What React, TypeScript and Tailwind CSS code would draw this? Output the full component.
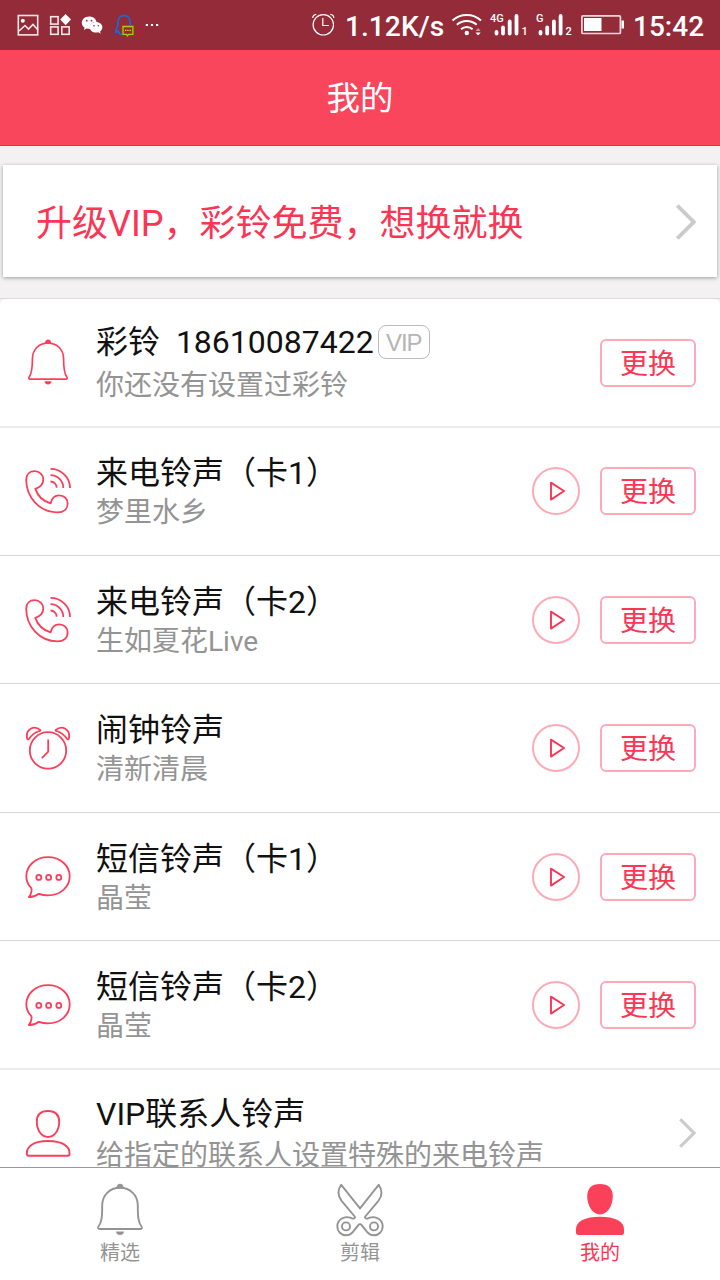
import type { ReactNode } from "react";

type Row = {
  icon: ReactNode;
  title: string;
  sub: string;
  box: string;
  pad: string;
  gap?: string;
  divider?: "thin" | "soft";
  vip?: boolean;
  play?: boolean;
  link?: boolean;
};

function StatusBar() {
  return (
    <div className="flex h-[50px] shrink-0 items-center bg-[#932b38] pl-[17px] pr-[15px] text-white">
      <svg className="h-[50px] w-[150px] shrink-0" viewBox="17 0 150 50" fill="none">
        <g stroke="#f7e6e8" strokeWidth="1.6">
          <rect x="18.3" y="15.5" width="19.4" height="19.4" />
          <path d="M19 31l6-5.5 3.5 3.5 4.5-4.5 5 5.5" />
          <rect x="50.7" y="16.7" width="7.4" height="7.4" />
          <rect x="50.7" y="26.9" width="7.4" height="7.4" />
          <rect x="61.8" y="26.9" width="7.4" height="7.4" />
        </g>
        <circle cx="22.8" cy="20.7" r="2" fill="#fff" />
        <path d="M65.6 14l5.4 5.6-5.4 5.6-5.4-5.6z" fill="#fff" />
        <path
          d="M89.2 16.4c-4.2 0-7.4 2.8-7.4 6.3 0 2 1 3.8 2.8 5l-.8 2.4 2.8-1.5c1.2.3 2.2.5 3.4.4-.9-4.2 2.4-7.5 6.600-7.3-.7-3.1-3.7-5.3-7.4-5.3z"
          fill="#fff"
        />
        <path
          d="M96 21.9c-3.6 0-6.3 2.4-6.3 5.3 0 3.1 2.9 5.4 6.3 5.4.8 0 1.6-.1 2.3-.3l2.4 1.4-.6-2.2c1.5-1.1 2.3-2.5 2.3-4.2 0-3-2.9-5.4-6.4-5.4z"
          fill="#fff"
        />
        <g fill="#932b38">
          <circle cx="86.7" cy="20.7" r="0.9" />
          <circle cx="91.5" cy="20.7" r="0.9" />
          <circle cx="94" cy="25.7" r="0.8" />
          <circle cx="98.3" cy="25.7" r="0.8" />
        </g>
        <path
          d="M122.5 34.3c-1.8.3-3-.2-3.200-1.5l-1.300-2c-.8 1-1.600 1.800-2 1.500-.6-.5.1-3.800 1.700-5.700v-2.900c0-5 2.600-8.300 6.400-8.300s6.300 3.300 6.300 8.300v1.500"
          stroke="#0d6fe8"
          strokeWidth="1.6"
        />
        <path d="M123 26.5h9.900v7.800h-4.200l-1.400 1.500-.8-1.500H123z" stroke="#a4d30a" strokeWidth="1.3" />
        <path d="M125 30.400h1.300M127.300 30.400h1.300M129.600 30.400h1.300" stroke="#d5e314" strokeWidth="1.4" />
        <path d="M145.800 25h2.200M150.900 25h2.200M156 25h2.200" stroke="#fff" strokeWidth="2" />
      </svg>
      <div className="ml-auto flex items-center">
        <svg className="h-[50px] w-[24px]" viewBox="311 0 24 50" fill="none" stroke="#fff" strokeWidth="1.2">
          <circle cx="323.3" cy="24.8" r="10.2" />
          <path d="M322.800 18v7.500h6M312.800 18c0-2 1-3.500 3.500-3.700M333.800 18c0-2-1-3.500-3.500-3.700" />
        </svg>
        <span className="ml-[10px] w-[100px] whitespace-nowrap pt-[3px] text-[28.2px] font-medium leading-[47px]">1.12K/s</span>
        <svg className="ml-[6px] h-[50px] w-[176px]" viewBox="451 0 176 50" fill="none">
          <path
            d="M452.500 20.500c8-7.300 20.500-7.300 28.500 0M456.800 24.800c5.700-5.200 14.200-5.200 19.900 0M461 29.300c3.300-3 8.300-3 11.600 0"
            stroke="#fff"
            strokeWidth="2"
          />
          <circle cx="466.8" cy="33" r="2.2" fill="#fff" />
          <path d="M475.500 31l2.600-3 2.600 3z" fill="#c8949b" />
          <path d="M475.500 32.500l2.600 3 2.600-3z" fill="#fff" />
          <g stroke="#fff" strokeWidth="3.8" strokeLinecap="round">
            <path d="M496.500 32v1.500M503 27.500v6M509.700 21.500v12M516.500 16v17.500" />
            <path d="M540.500 32v1.500M547.200 27.500v6M553.900 21.500v12M560.600 16v17.500" />
          </g>
          <g fill="#fff" fontFamily="Roboto, sans-serif" fontSize="11" fontWeight="500">
            <text x="490" y="22">4G</text>
            <text x="536" y="22">G</text>
            <text x="521.5" y="35.3">1</text>
            <text x="565.5" y="35.3">2</text>
          </g>
          <rect x="581.9" y="15.9" width="38.5" height="17.6" rx="1" stroke="#f0d9dc" strokeWidth="1.7" />
          <rect x="584" y="18" width="17.5" height="13" fill="#fff" />
          <path d="M621.500 20.500h2.500v8h-2.500z" fill="#fff" />
        </svg>
        <span className="ml-[6px] w-[72px] whitespace-nowrap pt-[3px] text-[28px] font-medium leading-[47px]">15:42</span>
      </div>
    </div>
  );
}

function Bell({ className }: { className: string }) {
  return (
    <svg className={className} viewBox="0 0 48 54" fill="none" stroke="currentColor" strokeWidth="1.9" strokeLinejoin="round">
      <path d="M24 4.800C13.500 4.800 6.200 12.300 6.200 22.500c0 10-.2 16.500-3.700 21-.8 1.200-.4 2.500 1 2.500h41c1.400 0 1.800-1.300 1-2.500-3.500-4.500-3.700-11-3.700-21C41.800 12.300 34.500 4.800 24 4.800z" />
      <path d="M21.500 4.500c0-3.600 5-3.600 5 0z" fill="currentColor" />
      <path d="M20 48.500h8c0 4.700-8 4.700-8 0z" fill="currentColor" stroke="none" />
    </svg>
  );
}

function Phone() {
  return (
    <svg className="size-12" viewBox="0 -0.7 48 48" fill="none" stroke="currentColor" strokeWidth="1.8" strokeLinejoin="round">
      <path d="M2.200 12C2.200 6.500 5.800 3.500 10.600 3.500c4.900 0 8.700 3.700 8.700 8.400 0 4.800-3 7.600-8 9.300 2.200 6.300 7.500 12.300 15.300 14.400 1-4.800 3.700-8 8.600-8 5 0 8.400 3.500 8.400 8.200 0 5.500-4 8.800-10 8.800C15.500 44.600 2.200 29.500 2.200 12z" />
      <path d="M26.500 1.200C37 1.200 46 9.500 46 20.300M26.500 7.500c7 0 12.800 5.500 12.800 12.800M26.500 13.800c3.500 0 6.200 2.800 6.200 6.200" />
    </svg>
  );
}

function AlarmClock() {
  return (
    <svg className="size-12" viewBox="0 0.5 48 48" fill="none" stroke="currentColor" strokeWidth="1.8" strokeLinejoin="round">
      <circle cx="24" cy="26.9" r="18.2" />
      <path d="M24.200 17v11.200l-5.800 5.800" strokeLinecap="square" />
      <path d="M16.300 6.500C10 1.500 1.500 5.500 3 14.500c.1 1.200.8 1.800 1.700 1.200 3-4.500 6.300-6.800 10.700-8.200.9-.2 1.200-.6.9-1zM31.700 6.500c6.300-5 14.800-1 13.300 8-.1 1.200-.8 1.800-1.700 1.200-3-4.500-6.300-6.800-10.700-8.200-.9-.2-1.200-.6-.9-1z" />
    </svg>
  );
}

function Message() {
  return (
    <svg className="size-12" viewBox="0 0 48 48" fill="none" stroke="currentColor" strokeWidth="1.8" strokeLinejoin="round">
      <path d="M24 4.200C11.700 4.200 2.300 12.500 2.300 23.300c0 5.200 2 9 5.200 12 .4 3.500-.7 6.300-2.700 8.700 3.700.2 7-.8 10-3.200 3 1 6 1.500 9.200 1.500 12.300 0 21.700-8.300 21.700-19S36.300 4.200 24 4.200z" />
      <circle cx="14.8" cy="24.4" r="2.5" />
      <circle cx="24.6" cy="24.4" r="2.5" />
      <circle cx="34.8" cy="24.4" r="2.5" />
    </svg>
  );
}

function Contact() {
  return (
    <svg className="size-12" viewBox="0 -1 48 48" fill="none" stroke="currentColor" strokeWidth="1.9" strokeLinejoin="round">
      <path d="M24 1c-7.500 0-11.200 4.300-11.200 10.800C12.800 20 17.500 27 24 27s11.200-7 11.200-15.200C35.200 5.300 31.500 1 24 1z" />
      <path d="M24 31C10 31 2.800 36 2.800 43.500c0 1.500.4 2.300 1.800 2.300h39c1.400 0 2-.8 2-2.300C45.600 36 38 31 24 31z" />
    </svg>
  );
}

function Scissors() {
  return (
    <svg className="h-[54px] w-[48px]" viewBox="0 0 48 54" fill="none" stroke="currentColor" strokeWidth="1.9" strokeLinejoin="round">
      <path d="M5.200 1.800L24 25.400 42.700 1.800c3.700 5.300 3.500 11-.3 16L29.300 33.500c-.8 1.200.4 2.600 2.200 2 .8-.3 1.400-.5 2.200-.8 6.300-2 13 2 13 8.800 0 5-3.900 8.800-8.800 8.800-3 0-5-1.200-6.700-3.200l-5.700-7.200c-.9-1-2.100-1-3 0l-5.700 7.200c-1.700 2-3.700 3.200-6.700 3.200-4.900 0-8.800-3.800-8.800-8.800 0-6.800 6.700-10.800 13-8.800.8.300 1.400.5 2.200.8 1.800.6 3-.8 2.200-2L5.600 17.800C1.700 12.800 1.500 7.100 5.200 1.800z" />
      <circle cx="10" cy="43.4" r="4" />
      <circle cx="38" cy="43.4" r="4" />
    </svg>
  );
}

function Chevron({ className }: { className: string }) {
  return (
    <svg className={className} viewBox="0 0 20 36" fill="none" stroke="#cbcbcb" strokeWidth="3.8">
      <path d="M1.300 1.500L17.700 18 1.300 34.500" />
    </svg>
  );
}

const rows: Row[] = [
  { icon: <Bell className="mb-0.5 h-[49px] w-[42px]" />, title: "彩铃  18610087422", sub: "你还没有设置过彩铃", box: "h-[129px]", pad: "pt-px", gap: "gap-1", divider: "soft", vip: true },
  { icon: <Phone />, title: "来电铃声（卡1）", sub: "梦里水乡", box: "h-[128px]", pad: "pb-px", divider: "thin", play: true },
  { icon: <Phone />, title: "来电铃声（卡2）", sub: "生如夏花Live", box: "h-[128px]", pad: "pt-px", divider: "thin", play: true },
  { icon: <AlarmClock />, title: "闹钟铃声", sub: "清新清晨", box: "h-[129px]", pad: "pt-0", divider: "thin", play: true },
  { icon: <Message />, title: "短信铃声（卡1）", sub: "晶莹", box: "h-[128px]", pad: "pt-px", divider: "thin", play: true },
  { icon: <Message />, title: "短信铃声（卡2）", sub: "晶莹", box: "h-[129px]", pad: "pt-px", divider: "soft", play: true },
  { icon: <Contact />, title: "VIP联系人铃声", sub: "给指定的联系人设置特殊的来电铃声", box: "h-[128px]", pad: "pb-0.5", gap: "gap-0.5", link: true },
];

function RingtoneRow({ row }: { row: Row }) {
  return (
    <li className={`flex shrink-0 flex-col ${row.box}`}>
      <div className={`flex min-h-0 flex-1 items-center px-6 ${row.pad}`}>
        <div className="flex w-12 shrink-0 justify-center text-[#fb3f5a]">{row.icon}</div>
        <div className={`ml-6 flex flex-1 flex-col whitespace-nowrap ${row.vip ? "pt-0.5" : "pt-1"} ${row.gap ?? ""}`}>
          <div className="flex items-center">
            <span className="whitespace-pre text-[32px] leading-10 text-[#111]">{row.title}</span>
            {row.vip && (
              <span className="ml-1 flex h-[34px] w-[52px] items-center justify-center rounded-lg border border-[#bbb] pt-0.5 font-['Liberation_Sans'] text-[24px] leading-none tracking-[-1px] text-[#b5b5b5]">
                VIP
              </span>
            )}
          </div>
          <span className="text-[28px] leading-10 text-[#949494]">{row.sub}</span>
        </div>
        {row.play && (
          <button aria-label="播放" className="mr-5 flex size-12 items-center justify-center rounded-full border-2 border-[#fdaab6]">
            <svg className="size-6" viewBox="0 0 24 24" fill="none" stroke="#fb3654" strokeWidth="1.9" strokeLinejoin="round">
              <path d="M7 3.600L20 12 7 20.600z" />
            </svg>
          </button>
        )}
        {row.link ? (
          <Chevron className="h-[30px] w-[17px]" />
        ) : (
          <button className="h-12 w-24 rounded-md border-2 border-[#fdaab6] pt-1 text-[28px] leading-10 text-[#fb3654]">更换</button>
        )}
      </div>
      {row.divider === "thin" && <div className="h-px bg-[#d9d9d9]" />}
      {row.divider === "soft" && <div className="h-0.5 bg-[#ededed]" />}
    </li>
  );
}

export default function App() {
  return (
    <div className="flex h-[1280px] w-[720px] flex-col overflow-hidden bg-[#f3f1f2] font-[Roboto,'Noto_Sans_CJK_SC',sans-serif]">
      <StatusBar />
      <header className="flex h-24 shrink-0 items-center justify-center border-b border-[#e2304b] bg-[#fa465d] pt-0.5 text-[33.5px] leading-[48px] text-white">
        我的
      </header>

      <div className="mx-[3px] mt-[19px] flex h-28 shrink-0 items-center justify-between bg-white pl-[33px] pr-[21px] pt-0.5 shadow-[0_1px_4px_rgba(0,0,0,0.35)]">
        <span className="pt-1 text-[36px] leading-[54px] text-[#fb3654]">升级VIP，彩铃免费，想换就换</span>
        <Chevron className="h-[36px] w-[20px]" />
      </div>

      <div className="mt-[21px] h-px shrink-0 bg-[#dcdadb]" />
      <ul className="flex min-h-0 flex-1 flex-col overflow-hidden rounded-t-md bg-white">
        {rows.map((row, i) => (
          <RingtoneRow key={i} row={row} />
        ))}
      </ul>

      <nav className="grid h-[113px] shrink-0 grid-cols-3 border-t border-[#999] bg-white text-[20px] leading-8 text-[#949494]">
        <div className="flex flex-col items-center pt-[15px]">
          <Bell className="h-[54px] w-[48px]" />
          <span>精选</span>
        </div>
        <div className="flex flex-col items-center pt-[15px]">
          <Scissors />
          <span>剪辑</span>
        </div>
        <div className="flex flex-col items-center pt-[15px] text-[#fb3654]">
          <svg className="h-[54px] w-[48px]" viewBox="0 0 48 54" fill="#fb415a">
            <path d="M24 1c-8.500 0-12.800 4.500-12.800 12.500C11.200 22.500 16.700 31.500 24 31.500s12.800-9 12.800-18C36.800 5.500 32.500 1 24 1z" />
            <path d="M24 33.700C9 33.700 0 38.500 0 46v3.500C0 51 .9 52 2.500 52h43c1.600 0 2.500-1 2.500-2.500V46c0-7.500-9-12.300-24-12.300z" />
          </svg>
          <span>我的</span>
        </div>
      </nav>
    </div>
  );
}
